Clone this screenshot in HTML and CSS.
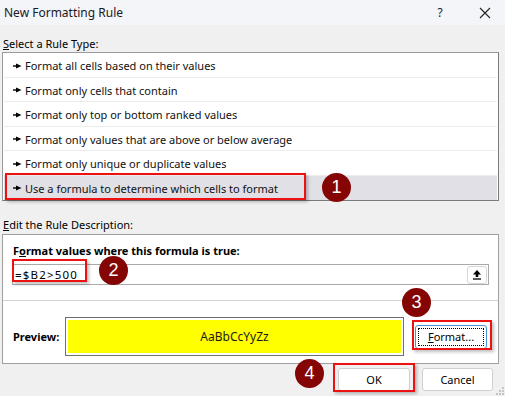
FILE: index.html
```html
<!DOCTYPE html>
<html>
<head>
<meta charset="utf-8">
<link rel="stylesheet" href="styles.css">
</head>
<body>
<div class="dialog">
  <div class="titlebar">
    <span class="title">New Formatting Rule</span>
    <span class="help">?</span>
    <span class="close"><svg width="12" height="12" viewBox="0 0 12 12"><path d="M1 1 L11 11 M11 1 L1 11" stroke="#222" stroke-width="1.1" fill="none"/></svg></span>
  </div>
  <div class="body">
    <div class="label label-select"><u>S</u>elect a Rule Type:</div>
    <div class="listbox">
      <div class="row"><svg class="arrow" width="9" height="6" viewBox="0 0 9 6"><path d="M0 3 H4" stroke="#000" stroke-width="1.4"/><path d="M3 0.5 L8.5 3 L3 5.5 Z" fill="#000"/></svg>Format all cells based on their values</div>
      <div class="row"><svg class="arrow" width="9" height="6" viewBox="0 0 9 6"><path d="M0 3 H4" stroke="#000" stroke-width="1.4"/><path d="M3 0.5 L8.5 3 L3 5.5 Z" fill="#000"/></svg>Format only cells that contain</div>
      <div class="row"><svg class="arrow" width="9" height="6" viewBox="0 0 9 6"><path d="M0 3 H4" stroke="#000" stroke-width="1.4"/><path d="M3 0.5 L8.5 3 L3 5.5 Z" fill="#000"/></svg>Format only top or bottom ranked values</div>
      <div class="row"><svg class="arrow" width="9" height="6" viewBox="0 0 9 6"><path d="M0 3 H4" stroke="#000" stroke-width="1.4"/><path d="M3 0.5 L8.5 3 L3 5.5 Z" fill="#000"/></svg>Format only values that are above or below average</div>
      <div class="row"><svg class="arrow" width="9" height="6" viewBox="0 0 9 6"><path d="M0 3 H4" stroke="#000" stroke-width="1.4"/><path d="M3 0.5 L8.5 3 L3 5.5 Z" fill="#000"/></svg>Format only unique or duplicate values</div>
      <div class="row selected"><svg class="arrow" width="9" height="6" viewBox="0 0 9 6"><path d="M0 3 H4" stroke="#000" stroke-width="1.4"/><path d="M3 0.5 L8.5 3 L3 5.5 Z" fill="#000"/></svg>Use a formula to determine which cells to format</div>
    </div>
    <div class="label label-edit"><u>E</u>dit the Rule Description:</div>
    <div class="group">
      <div class="formula-label">F<u>o</u>rmat values where this formula is true:</div>
      <div class="input">
        <span class="input-text">=$B2&gt;500</span>
        <span class="ref-btn"><svg width="10" height="11" viewBox="0 0 10 11"><path d="M5 1 L9 5.5 H6.3 V8 H3.7 V5.5 H1 Z" fill="#000"/><path d="M1 10 H9" stroke="#000" stroke-width="1.3"/></svg></span>
      </div>
      <div class="divider"></div>
      <div class="preview-row">
        <span class="preview-label">Preview:</span>
        <div class="preview-box"><div class="preview-fill">AaBbCcYyZz</div></div>
        <div class="btn format-btn"><span class="focus"><u>F</u>ormat...</span></div>
      </div>
    </div>
    <div class="footer">
      <div class="btn ok-btn">OK</div>
      <div class="btn cancel-btn">Cancel</div>
    </div>
  </div>
  <svg class="grip" width="9" height="9" viewBox="0 0 9 9"><g fill="#c4c4c4"><rect x="7" y="1" width="2" height="2"/><rect x="4" y="4" width="2" height="2"/><rect x="7" y="4" width="2" height="2"/><rect x="1" y="7" width="2" height="2"/><rect x="4" y="7" width="2" height="2"/><rect x="7" y="7" width="2" height="2"/></g></svg>

  <div class="mark mark1"></div>
  <div class="mark mark2"></div>
  <div class="mark mark3"></div>
  <div class="mark mark4"></div>
  <div class="badge badge1">1</div>
  <div class="badge badge2">2</div>
  <div class="badge badge3">3</div>
  <div class="badge badge4">4</div>
</div>
</body>
</html>
```
FILE: styles.css
```css
* { box-sizing: border-box; }
html, body { margin: 0; padding: 0; }
body {
  width: 505px;
  height: 396px;
  overflow: hidden;
  background: #f0f0f0;
  font-family: "Noto Sans", "Liberation Sans", sans-serif;
  font-size: 11px;
  color: #000;
}
.dialog {
  position: relative;
  width: 505px;
  height: 396px;
}
.titlebar {
  height: 25px;
  background: #f3f5f9;
  display: flex;
  align-items: center;
  padding-left: 4px;
}
.title { font-size: 12px; color: #1a1a1a; flex: 1; }
.help { font-size: 12px; width: 20px; text-align: center; margin-right: 29px; color: #222; }
.close { width: 12px; height: 12px; margin-right: 14px; display: flex; }
.body {
  padding: 0 6px 0 2px;
}
.label { height: 15px; line-height: 15px; padding-left: 1px; color: #000; }
.label-select { margin-top: 11px; margin-bottom: 1px; }
.listbox {
  background: #fff;
  border: 1px solid #7a7a7a;
  border-left-color: #9a9a9a;
  border-top-color: #9a9a9a;
  height: 149px;
  padding: 0 1px;
}
.row {
  height: 24.5px;
  display: flex;
  align-items: center;
  padding-left: 9px;
  padding-top: 2px;
  border-bottom: 1px solid #ececec;
  white-space: nowrap;
  color: #111;
}
.row:nth-child(6) { border-bottom: none; padding-top: 1px; }
.row.selected { background: #e0e0e6; }
.arrow { margin-right: 3px; flex: none; }
.label-edit { margin-top: 16px; margin-bottom: 2px; }
.group {
  background: #fff;
  border: 1px solid #a0a0a0;
  height: 130px;
  padding: 0 9px;
}
.formula-label {
  font-weight: bold;
  margin-top: 8px;
  height: 15px;
  line-height: 15px;
  padding-left: 1px;
}
.input {
  margin-top: 6px;
  height: 21px;
  border: 1px solid #a9a9a9;
  display: flex;
  align-items: center;
  justify-content: space-between;
  padding-left: 2px;
  padding-right: 1px;
}
.input-text { font-size: 11.5px; letter-spacing: 1.2px; }
.ref-btn {
  width: 20px;
  height: 18px;
  border: 1px solid #d6d6d6;
  border-radius: 3px;
  display: flex;
  align-items: center;
  justify-content: center;
}
.divider {
  height: 1px;
  background: #d4d4d4;
  margin: 15px -9px 0 -9px;
}
.preview-row {
  display: flex;
  align-items: center;
  margin-top: 16px;
}
.preview-label { font-weight: bold; width: 53px; padding-left: 1px; }
.preview-box {
  width: 339px;
  height: 39px;
  border: 1px solid #6f6f6f;
  padding: 2px;
  background: #fff;
}
.preview-fill {
  background: #ffff00;
  height: 100%;
  display: flex;
  align-items: center;
  justify-content: center;
  font-size: 12px;
  color: #1a1a1a;
}
.btn {
  background: #fff;
  border: 1px solid #d0d0d0;
  border-radius: 3px;
  display: flex;
  align-items: center;
  justify-content: center;
  font-size: 11px;
}
.format-btn {
  margin-left: 11px;
  width: 72px;
  height: 24px;
  border-color: #4a90d9;
  padding: 2px;
}
.format-btn .focus {
  border: 1px dotted #000;
  width: 100%;
  height: 100%;
  display: flex;
  align-items: center;
  justify-content: center;
}
.footer {
  display: flex;
  justify-content: flex-end;
  gap: 12px;
  padding-right: 6px;
  margin-top: 4px;
}
.ok-btn { width: 72px; height: 23px; }
.cancel-btn { width: 71px; height: 23px; }
.grip { position: absolute; right: 1px; bottom: 1px; }

.mark {
  position: absolute;
  border: 2px solid #ee1111;
  box-shadow: 2px 2px 3px rgba(0,0,0,0.25);
}
.mark1 { left: 5px; top: 173px; width: 301px; height: 27px; }
.mark2 { left: 12px; top: 259px; width: 75px; height: 23px; }
.mark3 { left: 412px; top: 320px; width: 80px; height: 30px; }
.mark4 { left: 333px; top: 363px; width: 82px; height: 29px; }

.badge {
  position: absolute;
  width: 29px;
  height: 29px;
  border-radius: 50%;
  background: #850505;
  color: #fff;
  font-size: 18px;
  display: flex;
  align-items: center;
  justify-content: center;
  font-family: "Liberation Sans", sans-serif;
}
.badge1 { left: 322px; top: 173px; }
.badge2 { left: 99px; top: 256px; }
.badge3 { left: 402px; top: 288px; }
.badge4 { left: 295px; top: 359px; }
```
